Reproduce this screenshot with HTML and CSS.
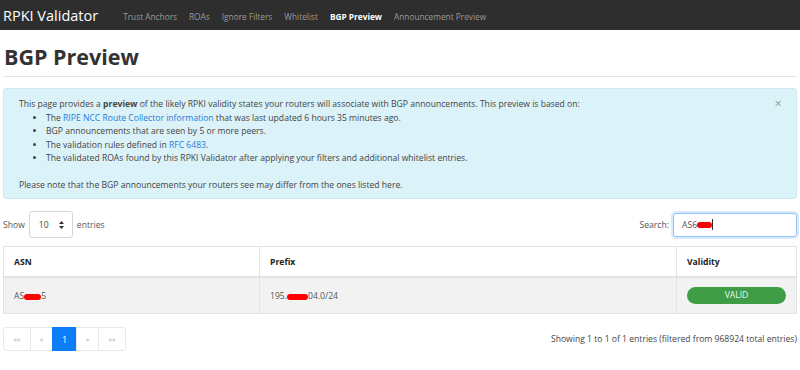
FILE: index.html
```html
<!DOCTYPE html>
<html lang="en">
<head>
  <meta charset="UTF-8">
  <title>RPKI Validator - BGP Preview</title>
  <link rel="stylesheet" href="styles.css">
</head>
<body>
  <!-- Navbar -->
  <nav class="navbar">
    <span class="brand">RPKI Validator</span>
    <ul class="nav-links">
      <li>Trust Anchors</li>
      <li>ROAs</li>
      <li>Ignore Filters</li>
      <li>Whitelist</li>
      <li class="active">BGP Preview</li>
      <li>Announcement Preview</li>
    </ul>
  </nav>

  <main class="page">
    <h1 class="page-title">BGP Preview</h1>

    <!-- Info alert -->
    <div class="alert">
      <span class="close">&times;</span>
      <p>This page provides a <b>preview</b> of the likely RPKI validity states your routers will associate with BGP announcements. This preview is based on:</p>
      <ul>
        <li>The <a>RIPE NCC Route Collector information</a> that was last updated 6 hours 35 minutes ago.</li>
        <li>BGP announcements that are seen by 5 or more peers.</li>
        <li>The validation rules defined in <a>RFC 6483</a>.</li>
        <li>The validated ROAs found by this RPKI Validator after applying your filters and additional whitelist entries.</li>
      </ul>
      <p class="note">Please note that the BGP announcements your routers see may differ from the ones listed here.</p>
    </div>

    <!-- Table controls -->
    <div class="controls">
      <label class="length">Show
        <span class="select">10
          <svg class="arrows" width="5" height="8" viewBox="0 0 5 8"><path d="M2.5 0L5 3H0z M2.5 8L5 5H0z" fill="#333"/></svg>
        </span>
        entries</label>
      <label class="search">Search:
        <span class="search-input">AS6<span class="redact r-search"></span><span class="caret"></span></span>
      </label>
    </div>

    <table class="data">
      <thead>
        <tr><th class="c-asn">ASN</th><th class="c-prefix">Prefix</th><th class="c-valid">Validity</th></tr>
      </thead>
      <tbody>
        <tr>
          <td>AS<span class="redact r-asn"></span>5</td>
          <td>195.<span class="redact r-prefix"></span>04.0/24</td>
          <td><span class="badge">VALID</span></td>
        </tr>
      </tbody>
    </table>

    <!-- Footer -->
    <div class="footer">
      <ul class="pagination">
        <li class="first">&laquo;&laquo;</li>
        <li class="prev">&laquo;</li>
        <li class="current">1</li>
        <li class="next">&raquo;</li>
        <li class="last">&raquo;&raquo;</li>
      </ul>
      <div class="info">Showing 1 to 1 of 1 entries (filtered from 968924 total entries)</div>
    </div>
  </main>
</body>
</html>
```

FILE: styles.css
```css
/* General */
body {
  margin: 0;
  font-family: 'Open Sans', 'Noto Sans', sans-serif;
  font-size: 8.6px;
  color: #333;
  background: #fff;
}

/* Navbar */
.navbar {
  display: flex;
  align-items: center;
  height: 30px;
  padding: 0 3px;
  background: #2e2e2e;
}

.brand {
  font-size: 14.5px;
  color: #fff;
  margin-right: 25px;
}

.nav-links {
  display: flex;
  gap: 12px;
  list-style: none;
  margin: 2px 0 0;
  padding: 0;
  color: #9a9a9a;
  font-size: 8.3px;
}

.nav-links .active {
  color: #fff;
  font-weight: bold;
}

/* Page */
.page {
  padding: 0 3px;
}

.page-title {
  margin: 0;
  padding: 12px 0 5px 1px;
  font-size: 21.5px;
  font-weight: bold;
  color: #333;
  border-bottom: 1px solid #e5e5e5;
}

/* Alert */
.alert {
  position: relative;
  margin-top: 11px;
  padding: 9px 15px 6px;
  background: #dbf2f9;
  border: 1px solid #cbe9f2;
  border-radius: 3px;
  line-height: 13.5px;
  color: #444;
}

.alert p {
  margin: 0;
}

.alert ul {
  margin: 0 0 13px;
  padding-left: 27px;
}

.alert a {
  color: #2a7bd6;
}

.alert .close {
  position: absolute;
  top: 8px;
  right: 14px;
  font-size: 13px;
  color: #999;
}

/* Controls */
.controls {
  display: flex;
  justify-content: space-between;
  align-items: center;
  margin-top: 12px;
  color: #555;
}

.length, .search {
  display: flex;
  align-items: center;
  gap: 4px;
}

.select {
  display: inline-flex;
  align-items: center;
  justify-content: space-between;
  box-sizing: border-box;
  width: 44px;
  height: 27px;
  padding: 0 8px 0 9px;
  border: 1px solid #d5d5d5;
  border-radius: 3px;
  color: #444;
}

.search-input {
  display: inline-flex;
  align-items: center;
  box-sizing: border-box;
  width: 124px;
  height: 24px;
  padding: 0 8px;
  border: 1px solid #90c2f5;
  border-radius: 3px;
  box-shadow: 0 0 0 2px #dbeafc;
  color: #555;
}

.caret {
  width: 1px;
  height: 11px;
  background: #333;
}

.redact {
  display: inline-block;
  height: 6px;
  background: #f00;
  border-radius: 3px;
  vertical-align: -1px;
}

.r-search { width: 15px; }
.r-asn { width: 17px; }
.r-prefix { width: 21px; }

/* Table */
.data {
  width: 100%;
  margin-top: 8px;
  border-collapse: collapse;
}

.data th, .data td {
  border: 1px solid #e3e3e3;
  padding: 0 10px;
  text-align: left;
}

.data th {
  height: 29px;
  font-weight: bold;
  color: #222;
  border-bottom: 2px solid #e3e3e3;
}

.data td {
  height: 35px;
  background: #f2f2f2;
  color: #555;
}

.c-asn { width: 235px; }
.c-valid { width: 99px; }

.badge {
  display: block;
  height: 17px;
  line-height: 17px;
  border-radius: 9px;
  background: #3f9e45;
  color: #e8f5e8;
  text-align: center;
}

/* Footer */
.footer {
  display: flex;
  justify-content: space-between;
  align-items: center;
  margin-top: 13px;
}

.pagination {
  display: flex;
  list-style: none;
  margin: 0;
  padding: 0;
  font-size: 7px;
}

.pagination li {
  display: flex;
  align-items: center;
  justify-content: center;
  box-sizing: border-box;
  height: 24px;
  border: 1px solid #e8e8e8;
  margin-left: -1px;
  color: #aaa;
}

.pagination .first {
  width: 28px;
  margin-left: 0;
  border-radius: 3px 0 0 3px;
}

.pagination .prev,
.pagination .next {
  width: 23px;
}

.pagination .last {
  width: 28px;
  border-radius: 0 3px 3px 0;
}

.pagination .current {
  width: 25px;
  background: #0a7df7;
  border-color: #0a7df7;
  color: #fff;
  font-size: 9px;
}

.info {
  color: #444;
}
```
